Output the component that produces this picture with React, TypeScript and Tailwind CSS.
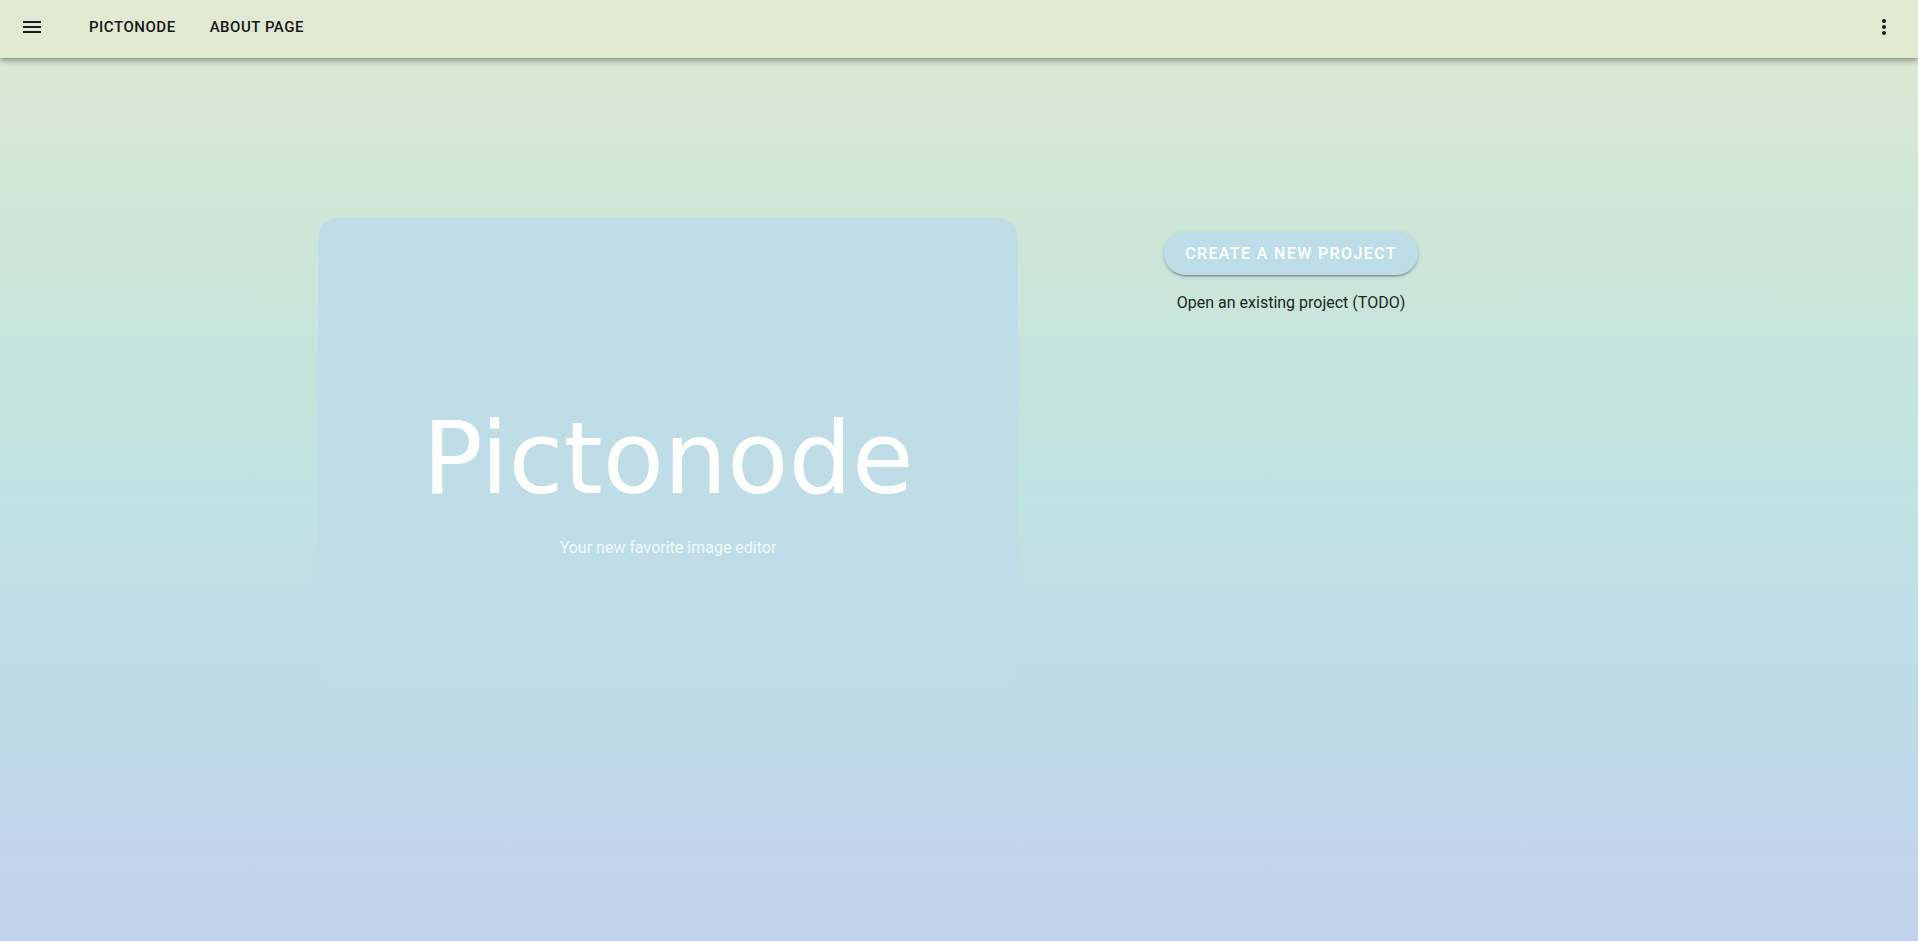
import React from 'react';

function MenuIcon() {
  return (
    <svg viewBox="0 0 24 24" className="h-6 w-6" fill="#1c1c1c">
      <path d="M3 18h18v-2H3zm0-5h18v-2H3zm0-7v2h18V6z" />
    </svg>
  );
}

function MoreVertIcon() {
  return (
    <svg viewBox="0 0 24 24" className="h-6 w-6" fill="#1c1c1c">
      <path d="M12 8c1.1 0 2-.9 2-2s-.9-2-2-2-2 .9-2 2 .9 2 2 2m0 2c-1.1 0-2 .9-2 2s.9 2 2 2 2-.9 2-2-.9-2-2-2m0 6c-1.1 0-2 .9-2 2s.9 2 2 2 2-.9 2-2-.9-2-2-2" />
    </svg>
  );
}

export default function App() {
  return (
    <div
      className="min-h-screen bg-[linear-gradient(180deg,#dfe9d0_0%,#d7e8d3_10%,#bfe3e1_50%,#bedde8_70%,#c3d2ec_100%)]"
      style={{ fontFamily: 'Roboto, "Liberation Sans", sans-serif' }}
    >
      <header className="relative z-10 flex h-[58px] items-start bg-[#e1e9d2] pt-[15px] pl-5 pr-[22px] shadow-[0_2px_4px_-1px_rgba(0,0,0,0.2),0_4px_5px_0_rgba(0,0,0,0.14),0_1px_10px_0_rgba(0,0,0,0.12)]">
        <button className="h-6 w-6">
          <MenuIcon />
        </button>
        <nav className="ml-[45px] flex items-center gap-[34px] text-[15px] font-medium uppercase leading-6 tracking-[0.035em] text-[#151515]">
          <a className="-mt-[1px]">Pictonode</a>
          <a>About page</a>
        </nav>
        <button className="ml-auto h-6 w-6">
          <MoreVertIcon />
        </button>
      </header>

      <main className="flex items-start pt-[160px] pl-[318px]">
        <section className="flex h-[470px] w-[700px] flex-col items-center rounded-[20px] bg-[#bedde7] pt-[191px]">
          <h1
            className="text-[100px] leading-[100px] text-white"
            style={{ fontFamily: '"DejaVu Sans", sans-serif' }}
          >
            Pictonode
          </h1>
          <p className="mt-[27px] text-base leading-6 text-[#f1f8fa]">Your new favorite image editor</p>
        </section>

        <div className="mt-[14px] flex w-[546px] flex-col items-center">
          <button className="h-[43px] rounded-full bg-[#bddde8] px-[21px] text-base font-medium uppercase tracking-[0.086em] text-white shadow-[0_3px_1px_-2px_rgba(0,0,0,0.2),0_2px_2px_0_rgba(0,0,0,0.14),0_1px_5px_0_rgba(0,0,0,0.12)]">
            Create a new project
          </button>
          <p className="mt-[16px] text-base leading-6 text-[#1d2520]">Open an existing project (TODO)</p>
        </div>
      </main>
    </div>
  );
}
